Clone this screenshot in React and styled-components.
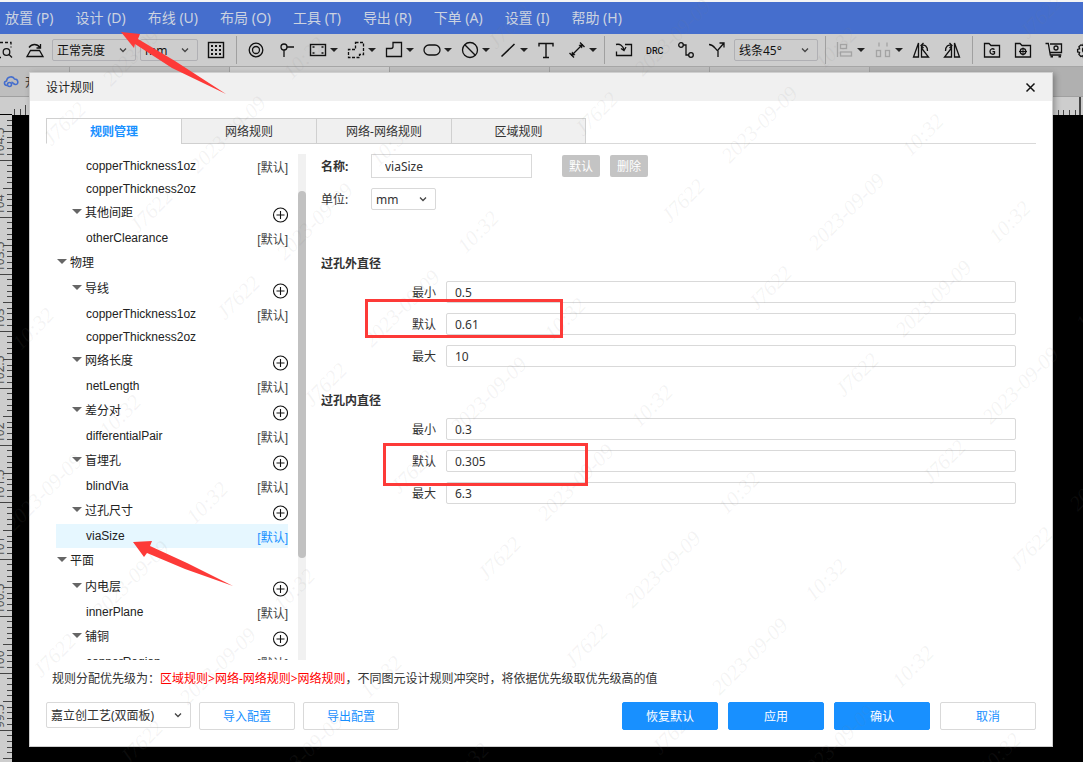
import React, { useState } from 'react';
import styled, { createGlobalStyle, css } from 'styled-components';

const GlobalStyle = createGlobalStyle`
  * {
    box-sizing: border-box;
  }
  body {
    margin: 0;
    font-family: "Noto Sans", "Noto Sans CJK SC", sans-serif;
    font-size: 12px;
    color: #333;
  }
  button, input, select {
    font: inherit;
    color: inherit;
    margin: 0;
  }
`;

const Page = styled.div`
  position: relative;
  display: flex;
  flex-direction: column;
  height: 100vh;
  overflow: hidden;
  background-color: #000;
`;

/* ---------- menu and toolbar ---------- */

const MenuBar = styled.nav`
  display: flex;
  flex: none;
  gap: 22px;
  height: 34px;
  padding-left: 5px;
  border-top: 2px solid #f4f4f4;
  background-color: #456ecd;
`;

const MenuItem = styled.button`
  padding: 0;
  border: 0;
  background: none;
  color: #ccd3e0;
  font-size: 14px;
  line-height: 20px;
  white-space: nowrap;
`;

const Toolbar = styled.div`
  display: flex;
  flex: none;
  align-items: center;
  height: 33px;
  margin-left: -11px;
  border-bottom: 1px solid #a6a6a6;
  background-color: #cdcdcd;
  color: #111;
  overflow: hidden;
`;

const ToolButton = styled.button`
  display: flex;
  flex: none;
  align-items: center;
  height: 28px;
  padding: 0 ${props => (props.$caret ? '3px' : '4px')} 0 3px;
  border: 0;
  background: none;
  color: ${props => (props.$disabled ? '#a3a3a3' : '#111')};
`;

const Caret = styled.span`
  width: 8px;
  border: 4px solid transparent;
  border-top-color: #222;
  border-bottom: 0;
`;

const Divider = styled.span`
  flex: none;
  width: 1px;
  height: 28px;
  margin: 0 4px;
  background-color: #a0a0a0;
`;

const SelectBox = styled.span`
  display: grid;
  flex: none;
  align-items: center;
  width: ${props => props.$width};
  height: ${props => props.$height || '22px'};
  margin: ${props => (props.$toolbar ? '0 3px 0 1px' : '0')};
  border: 1px solid ${props => (props.$toolbar ? '#b0b0b4' : '#d9d9d9')};
  border-radius: 2px;

  select, svg {
    grid-area: 1 / 1;
  }
  select {
    width: 100%;
    height: 100%;
    padding: 0 18px 0 4px;
    border: 0;
    outline: 0;
    appearance: none;
    background: none;
  }
  svg {
    justify-self: end;
    margin-right: 8px;
    pointer-events: none;
  }
`;

const DocTabs = styled.div`
  display: flex;
  flex: none;
  height: 30px;
  background-color: #b0b0b0;
  border-bottom: 1px solid #a0a0a0;
`;

const DocTab = styled.div`
  display: flex;
  align-items: center;
  gap: 6px;
  width: ${props => (props.$first ? '70px' : '160px')};
  padding-left: 3px;
  border-right: 1px solid #a0a0a0;
  background-color: ${props => (props.$active ? '#cdcdcd' : '#bebebe')};
  white-space: nowrap;
`;

const TopRuler = styled.svg`
  display: block;
  flex: none;
  width: 100%;
  height: 18px;
  background-color: #cdcdcd;
`;

const SideRuler = styled.svg`
  display: block;
  flex: 1;
  width: 12px;
  min-height: 0;
  background-color: #cdcdcd;
  font-size: 12px;
`;

/* ---------- dialog ---------- */

const Dialog = styled.section`
  position: absolute;
  top: 72px;
  right: 30px;
  bottom: 15px;
  left: 29px;
  display: flex;
  flex-direction: column;
  border: 1px solid #cfcfcf;
  background-color: #fff;
  box-shadow: 2px 2px 6px rgba(0, 0, 0, 0.3);
`;

const DialogHeader = styled.header`
  display: flex;
  flex: none;
  align-items: center;
  justify-content: space-between;
  height: 28px;
  padding: 0 16px;
  background-color: #f0f0f0;
`;

const DialogTitle = styled.h1`
  margin: 0;
  font-size: 12px;
  font-weight: normal;
  color: #222;
`;

const CloseButton = styled.button`
  display: flex;
  padding: 0;
  border: 0;
  background: none;
`;

const DialogBody = styled.div`
  display: flex;
  flex: 1;
  flex-direction: column;
  min-height: 0;
  padding: 17px 16px 16px;
`;

const TabList = styled.div`
  display: flex;
  flex: none;
  height: 26px;
  margin-bottom: 10px;

  &::after {
    content: '';
    flex: 1;
    border-bottom: 1px solid #d9d9d9;
  }
`;

const Tab = styled.button`
  width: 135px;
  padding: 0;
  border: 1px solid #d0d0d0;
  border-right-width: 0;
  background-color: #f0f0f0;

  &:last-of-type {
    border-right-width: 1px;
  }

  ${props => props.$active && css`
    border-bottom-color: #fff;
    background-color: #fff;
    color: #1890ff;
    font-weight: bold;
  `}
`;

const Columns = styled.div`
  display: flex;
  flex: 1;
  min-height: 0;
`;

const Tree = styled.div`
  width: 242px;
  padding-left: 10px;
  overflow: hidden;
`;

const TreeRow = styled.div`
  display: flex;
  align-items: center;
  justify-content: space-between;
  height: ${props => (props.$plain ? '22px' : '24px')};
  padding-left: 30px;
  background-color: ${props => (props.$selected ? '#e6f7ff' : 'transparent')};
  font-family: "Liberation Sans", "Noto Sans CJK SC", sans-serif;
  color: #222;
`;

const GroupRow = styled(TreeRow)`
  height: 26px;
  padding-bottom: 3px;
  padding-left: ${props => (props.$top ? '1px' : '16px')};
`;

const GroupName = styled.span`
  display: flex;
  align-items: center;
  gap: 3px;
`;

const GroupArrow = styled.span`
  border: 5px solid transparent;
  border-top-color: #666;
  border-bottom: 0;
`;

const AddButton = styled.button`
  display: flex;
  padding: 7px 0 0;
  border: 0;
  background: none;
  color: #111;
`;

const DefaultMark = styled.span`
  color: ${props => (props.$selected ? '#1890ff' : '#444')};
`;

const ScrollTrack = styled.div`
  width: 8px;
  margin-left: 10px;
  padding-top: 37px;
  background-color: #f1f1f1;
`;

const ScrollThumb = styled.div`
  height: 367px;
  border-radius: 4px;
  background-color: #c1c1c1;
`;

const RuleForm = styled.form`
  flex: 1;
  min-width: 0;
  padding: 0 20px 0 15px;
`;

const FormRow = styled.div`
  display: flex;
  align-items: center;
  height: 24px;
  margin-bottom: 9px;
`;

const RowLabel = styled.label`
  width: 50px;
  font-weight: ${props => (props.$bold ? 'bold' : 'normal')};
`;

const NameInput = styled.input`
  width: 161px;
  height: 24px;
  margin-right: 30px;
  padding: 0 13px;
  border: 1px solid #d9d9d9;
  outline: 0;
`;

const SmallButton = styled.button`
  width: 38px;
  height: 22px;
  margin-right: 10px;
  padding: 0;
  border: 0;
  border-radius: 2px;
  background-color: #c4c4c4;
  color: #fff;
`;

const FieldGroup = styled.fieldset`
  margin: 0 0 24px;
  padding: 0;
  border: 0;

  &:first-of-type {
    margin-top: 43px;
  }
`;

const FieldTitle = styled.legend`
  margin-bottom: 7px;
  padding: 0;
  font-weight: bold;
  line-height: 20px;
`;

const Field = styled.div`
  display: grid;
  grid-template-columns: 115px 1fr;
  column-gap: 10px;
  align-items: center;

  & + & {
    margin-top: 10px;
  }
  label {
    text-align: right;
  }
`;

const FieldInput = styled.input`
  width: 100%;
  height: 22px;
  padding: 0 8px;
  border: 1px solid #d9d9d9;
  border-radius: 2px;
  outline: 0;
`;

const Priority = styled.p`
  flex: none;
  margin: 0;
  padding: 9px 6px 13px;
  line-height: 20px;
  white-space: nowrap;
`;

const Highlight = styled.span`
  color: #f00;
`;

const Footer = styled.footer`
  display: flex;
  flex: none;
  align-items: flex-start;
  gap: 8px;
`;

const FooterActions = styled.div`
  display: flex;
  gap: 10px;
  margin-left: auto;
`;

const Button = styled.button`
  width: 96px;
  height: 28px;
  padding: 0;
  border: 1px solid ${props => (props.$primary ? '#1890ff' : '#d9d9d9')};
  border-radius: 2px;
  background-color: ${props => (props.$primary ? '#1890ff' : '#fff')};
  color: ${props => (props.$primary ? '#fff' : '#1890ff')};
`;

/* ---------- annotations and watermark ---------- */

const Overlay = styled.div`
  position: absolute;
  inset: 0;
  overflow: hidden;
  pointer-events: none;
`;

const MarkBox = styled.div`
  position: absolute;
  top: ${props => props.$top};
  left: ${props => props.$left};
  width: ${props => props.$width};
  height: ${props => props.$height};
  border: 3px solid #fd3a38;
`;

const Arrows = styled.svg`
  position: absolute;
  top: 0;
  left: 0;
  fill: #fd3a38;
`;

const WatermarkSheet = styled.div`
  display: grid;
  grid-template-columns: repeat(5, 108px 108px 108px 59px);
  grid-auto-rows: 123px;
  width: 1915px;
  align-items: center;
  justify-items: center;
  transform: rotate(-45deg) translate(-862px, -51px);
  transform-origin: 0 0;
  color: rgba(128, 128, 128, 0.09);
  font-family: "Liberation Serif", serif;
  font-size: 21px;
  font-style: italic;
`;

/* ---------- icons ---------- */

const Icon = ({ children }) => (
  <svg width="24" height="24" viewBox="0 0 24 24" fill="none" stroke="currentColor" strokeWidth="1.3">
    {children}
  </svg>
);

const Chevron = () => (
  <svg width="8" height="8" viewBox="0 0 8 8" fill="none" stroke="#444" strokeWidth="1.3">
    <path d="M1 2.5l3 3 3-3" />
  </svg>
);

const PlusCircle = () => (
  <svg width="16" height="16" viewBox="0 0 16 16" fill="none" stroke="currentColor" strokeWidth="1.1">
    <circle cx="8.5" cy="8" r="7" />
    <path d="M8.5 4v8M4.5 8h8" />
  </svg>
);

const icons = {
  marquee: <><path d="M3 4.5h16v5M3 19.500h6" strokeDasharray="3 2" /><circle cx="14.500" cy="14" r="3.300" /><path d="M17 16.500l3 3" /></>,
  flat: <><path d="M7.500 12.500h9l3.500 6H4z" /><path d="M6 9.500c3-4 8-4 11 0M17.500 6v4h-4" /></>,
  grid: <><rect x="4.500" y="4.500" width="15" height="15" strokeWidth="1.400" /><path d="M7 8h10M7 12h10M7 16h10" strokeWidth="2" strokeDasharray="2 2" /></>,
  via: <><circle cx="12" cy="12" r="6.800" /><circle cx="12" cy="12" r="3.500" /></>,
  pin: <><circle cx="9" cy="9" r="3" /><path d="M12 9h7M9 12v7" /></>,
  pad: <><rect x="4.500" y="6.500" width="15" height="11" strokeWidth="1.400" /><path d="M6.500 9h2M15.500 9h2M6.500 15h2M15.500 15h2" /></>,
  region: <path d="M11.500 4.500h8v12h-4v3h-11v-8h7z" strokeDasharray="3 1.500" />,
  poly: <path d="M11 4.500h8.500v14h-15v-8H9q2 0 2-2z" />,
  slot: <rect x="4" y="7" width="16" height="10" rx="5" />,
  forbid: <><circle cx="12" cy="12" r="7.500" /><path d="M6.800 6.800l10.500 10.500" /></>,
  line: <path d="M5.500 18.500L18.500 6" strokeWidth="1.6" />,
  text: <path d="M5 8.500V5.500h14v3M12 5.500v14M9 19.500h6" strokeWidth="1.400" />,
  measure: <><path d="M7 17L17 7M4.500 15l4.500 4.500M15 4.500l4.500 4.500" /><path d="M6 18l1-4.500 3.500 3.500zM18 6l-1 4.500L13.500 7z" fill="currentColor" stroke="none" /></>,
  importIn: <><path d="M13 6.500h6.500v11h-15v-4" /><path d="M4 6.500c4-1 7 1 8 5.500M9 10.500l3 2 2-3.500" /></>,
  drc: <text x="3" y="16" fontFamily="Roboto" fontSize="9" fontWeight="500" fill="currentColor" stroke="none">DRC</text>,
  route: <><circle cx="7" cy="7" r="2.300" /><circle cx="17" cy="17" r="2.300" /><path d="M9.300 7H12v10h2.700" /></>,
  fan: <><path d="M4 6.500c5 0 6 4.500 9 6.500v6M13 12l6-7M14.500 5H19v4.500" /></>,
  align: <><path d="M4.500 4v15" /><rect x="7.500" y="6.500" width="6" height="4" /><rect x="7.500" y="14" width="11" height="4" /></>,
  spread: <><path d="M8 4.500v4M16 4.500v4" /><rect x="5.500" y="12.500" width="4" height="6" /><rect x="14.500" y="12.500" width="4" height="6" /></>,
  flipLeft: <><path d="M9.500 5v14h-5zM12.500 10v9h7zM12 7.500c4-1.500 6.500 1 6.500 5.500M14.500 5L12 7.500l2.500 2.500" /></>,
  flipRight: <><path d="M14.500 5v14h5zM11.500 10v9h-7zM12 7.500C8 6 5.500 8.500 5.500 13M9.500 5L12 7.500 9.500 10" /></>,
  gerber: <><path d="M4.500 19V5.500H9l2 2h8.500V19z" /><path d="M14.500 11.500c-2-1.500-4.500-.5-4.500 2s3 3.500 4.500 2v-1.800h-2" /></>,
  place: <><path d="M4.500 19V5.500H9l2 2h8.500V19z" /><circle cx="12" cy="13.500" r="2.800" /><path d="M12 9.500v8M8 13.500h8" strokeWidth="1" /></>,
  cart: <><path d="M3.500 5.500h2.800l2 11.500h11M8 6h11.500v8.500H8" /><circle cx="14" cy="10" r="2" /><path d="M8.500 18.500h2.500M16.500 18.500H19" strokeWidth="2" /></>,
  gear: <><circle cx="12" cy="12" r="2.500" /><path d="M10.500 5.500h3l.6 2 2-.6 1.900 1.900-.6 2 2 .6v2.500l-2 .6.600 2-2 2-2-.7-.5 2h-3l-.6-2-2 .6-2-2 .7-2-2-.5v-2.500l2-.6-.7-2 2-1.900 2 .6z" /></>,
};

const Tool = ({ name, label, caret, disabled }) => (
  <ToolButton type="button" aria-label={label} $caret={caret} $disabled={disabled}>
    <Icon>{icons[name]}</Icon>
    {caret && <Caret />}
  </ToolButton>
);

/* ---------- data ---------- */

const menus = ['放置 (P)', '设计 (D)', '布线 (U)', '布局 (O)', '工具 (T)', '导出 (R)', '下单 (A)', '设置 (I)', '帮助 (H)'];

const tabs = ['规则管理', '网络规则', '网络-网络规则', '区域规则'];

const tree = [
  { id: 'space-1oz', name: 'copperThickness1oz', isDefault: true },
  { id: 'space-2oz', name: 'copperThickness2oz' },
  { group: '其他间距' },
  { id: 'other', name: 'otherClearance', isDefault: true },
  { group: '物理', top: true },
  { group: '导线' },
  { id: 'wire-1oz', name: 'copperThickness1oz', isDefault: true },
  { id: 'wire-2oz', name: 'copperThickness2oz' },
  { group: '网络长度' },
  { id: 'net', name: 'netLength', isDefault: true },
  { group: '差分对' },
  { id: 'diff', name: 'differentialPair', isDefault: true },
  { group: '盲埋孔' },
  { id: 'blind', name: 'blindVia', isDefault: true },
  { group: '过孔尺寸' },
  { id: 'via', name: 'viaSize', isDefault: true },
  { group: '平面', top: true },
  { group: '内电层' },
  { id: 'inner', name: 'innerPlane', isDefault: true },
  { group: '铺铜' },
  { id: 'region', name: 'copperRegion', isDefault: true },
];

const fieldGroups = [
  { id: 'outer', title: '过孔外直径', values: ['0.5', '0.61', '10'] },
  { id: 'hole', title: '过孔内直径', values: ['0.3', '0.305', '6.3'] },
];

const fieldLabels = ['最小', '默认', '最大'];

const rulerLabels = ['104.5', '104', '103.5', '103', '102.5', '102', '101.5', '101', '100.5', '100', '99.5', '99'];

const watermark = ['J7622', '2023-09-09', '10:32', ''];

// the sheet is turned by 45 degrees, so its corner cells never reach the window
const isOnScreen = (row, group, column) => {
  const along = -862 + group * 383 + column * 108 + 54;
  const down = 10 + row * 123;
  const x = (along + down) * Math.SQRT1_2;
  const y = (down - along) * Math.SQRT1_2;
  return x > -30 && y > -30 && x < window.innerWidth + 30 && y < window.innerHeight + 30;
};

/* ---------- parts ---------- */

const ToolbarSelect = ({ label, width, value }) => (
  <SelectBox $toolbar $width={width}>
    <select aria-label={label}><option>{value}</option></select>
    <Chevron />
  </SelectBox>
);

const MainToolbar = () => (
  <Toolbar>
    <Tool name="marquee" label="框选" />
    <Tool name="flat" label="翻转" />
    <ToolbarSelect label="亮度" width="84px" value="正常亮度" />
    <ToolbarSelect label="画布单位" width="58px" value="mm" />
    <Tool name="grid" label="网格" />
    <Divider />
    <Tool name="via" label="过孔" />
    <Tool name="pin" label="测试点" />
    <Tool name="pad" label="焊盘" caret />
    <Tool name="region" label="区域" caret />
    <Tool name="poly" label="铺铜" caret />
    <Tool name="slot" label="挖槽" caret />
    <Tool name="forbid" label="禁止区域" caret />
    <Tool name="line" label="线条" caret />
    <Tool name="text" label="文本" />
    <Tool name="measure" label="尺寸" caret />
    <Divider />
    <Tool name="importIn" label="导入变更" />
    <Tool name="drc" label="检查" />
    <Tool name="route" label="布线" />
    <Tool name="fan" label="拉伸" />
    <ToolbarSelect label="拐角" width="84px" value="线条45°" />
    <Divider />
    <Tool name="align" label="对齐" caret disabled />
    <Tool name="spread" label="分布" caret disabled />
    <Tool name="flipLeft" label="左旋转" />
    <Tool name="flipRight" label="右旋转" />
    <Divider />
    <Tool name="gerber" label="制板文件" />
    <Tool name="place" label="坐标文件" />
    <Tool name="cart" label="下单" />
    <Tool name="gear" label="设置" />
  </Toolbar>
);

const Rulers = () => (
  <>
    <TopRuler stroke="#444">
      <path d="M14.500 12v6M20.500 12v6M25.500 8v10M1058.500 13v5M1063.500 13v5M1069.500 13v5M1075.500 13v5" />
      <path d="M1080 0v18" strokeWidth="2" />
      <path d="M0 17.500h12" stroke="#000" />
    </TopRuler>
    <SideRuler>
      {rulerLabels.map((label, i) => (
        <g key={label} transform={`translate(0 ${i * 57 - 13})`}>
          <path
            stroke="#444"
            d="M7 6.500h5M7 12.500h5M7 18.500h5M7 23.500h5M3 29.500h9M7 35.500h5M7 40.500h5M7 46.500h5M7 52.500h5M0 58.500h12"
          />
          <text transform="translate(4 56) rotate(-90)" fill="#555">{label}</text>
        </g>
      ))}
    </SideRuler>
  </>
);

const RuleTree = () => {
  const [selected, setSelected] = useState('via');

  return <Tree>
    {tree.map(row => (row.group
      ? <GroupRow key={row.group} $top={row.top}>
        <GroupName><GroupArrow />{row.group}</GroupName>
        {!row.top && <AddButton type="button" aria-label={`新增${row.group}`}><PlusCircle /></AddButton>}
      </GroupRow>
      : <TreeRow
        key={row.id}
        $plain={!row.isDefault}
        $selected={row.id === selected}
        onClick={() => setSelected(row.id)}
      >
        <span>{row.name}</span>
        {row.isDefault && <DefaultMark $selected={row.id === selected}>[默认]</DefaultMark>}
      </TreeRow>
    ))}
  </Tree>
};

const RuleDetails = () => (
  <RuleForm>
    <FormRow>
      <RowLabel $bold htmlFor="rule-name">名称:</RowLabel>
      <NameInput id="rule-name" defaultValue="viaSize" />
      <SmallButton type="button">默认</SmallButton>
      <SmallButton type="button">删除</SmallButton>
    </FormRow>
    <FormRow>
      <RowLabel htmlFor="rule-unit">单位:</RowLabel>
      <SelectBox $width="65px">
        <select id="rule-unit"><option>mm</option></select>
        <Chevron />
      </SelectBox>
    </FormRow>
    {fieldGroups.map(group => (
      <FieldGroup key={group.id}>
        <FieldTitle>{group.title}</FieldTitle>
        {group.values.map((value, i) => (
          <Field key={fieldLabels[i]}>
            <label htmlFor={`${group.id}-${i}`}>{fieldLabels[i]}</label>
            <FieldInput id={`${group.id}-${i}`} defaultValue={value} />
          </Field>
        ))}
      </FieldGroup>
    ))}
  </RuleForm>
);

const RulesDialog = () => {
  const [active, setActive] = useState(tabs[0]);

  return <Dialog>
    <DialogHeader>
      <DialogTitle>设计规则</DialogTitle>
      <CloseButton type="button" aria-label="关闭">
        <svg width="11" height="11" viewBox="0 0 11 11" stroke="#111" strokeWidth="1.5">
          <path d="M1.500 1.500l8 8M9.500 1.500l-8 8" />
        </svg>
      </CloseButton>
    </DialogHeader>
    <DialogBody>
      <TabList>
        {tabs.map(tab => (
          <Tab key={tab} type="button" $active={tab === active} onClick={() => setActive(tab)}>{tab}</Tab>
        ))}
      </TabList>
      <Columns>
        <RuleTree />
        <ScrollTrack><ScrollThumb /></ScrollTrack>
        <RuleDetails />
      </Columns>
      <Priority>
        规则分配优先级为：<Highlight>区域规则&gt;网络-网络规则&gt;网络规则</Highlight>，不同图元设计规则冲突时，将依据优先级取优先级高的值
      </Priority>
      <Footer>
        <SelectBox $width="145px" $height="26px">
          <select aria-label="工艺"><option>嘉立创工艺(双面板)</option></select>
          <Chevron />
        </SelectBox>
        <Button type="button">导入配置</Button>
        <Button type="button">导出配置</Button>
        <FooterActions>
          <Button type="button" $primary>恢复默认</Button>
          <Button type="button" $primary>应用</Button>
          <Button type="button" $primary>确认</Button>
          <Button type="button">取消</Button>
        </FooterActions>
      </Footer>
    </DialogBody>
  </Dialog>
};

const Watermark = () => (
  <Overlay aria-hidden="true">
    <WatermarkSheet>
      {Array.from({ length: 11 * 5 }, (_, n) => watermark.map((text, i) => (
        <span key={`${n}-${i}`}>{isOnScreen(Math.floor(n / 5), n % 5, i) && text}</span>
      )))}
    </WatermarkSheet>
  </Overlay>
);

const App = () => (
  <Page>
    <GlobalStyle />
    <MenuBar>
      {menus.map(menu => <MenuItem key={menu} type="button">{menu}</MenuItem>)}
    </MenuBar>
    <MainToolbar />
    <DocTabs>
      <DocTab $first>
        <svg width="16" height="13" viewBox="0 0 16 13" fill="none" stroke="#456ecd" strokeWidth="1.6">
          <path d="M4 10.500C1 10.500.5 6.500 3.500 6 4 1.500 10 .5 11.500 4c4 0 4.500 5.500 1 5.500-2 0-2.500-2-4-2.500" />
          <circle cx="6.500" cy="9.500" r="2" />
        </svg>
        开
      </DocTab>
      <DocTab />
      <DocTab $active />
      <DocTab />
      <DocTab />
      <DocTab />
    </DocTabs>
    <Rulers />
    <RulesDialog />
    <Watermark />
    <Overlay>
      <MarkBox $top="299px" $left="365px" $width="198px" $height="39px" />
      <MarkBox $top="443px" $left="383px" $width="205px" $height="43px" />
      <Arrows width="240" height="600" viewBox="0 0 240 600">
        <path d="M121 32l19 2-2 5 37 22 51 33-54-26-37-24-1 4z" />
        <path d="M133 542l19-1-2 5 37 17 46 23-48-17-38-16-3 4z" />
      </Arrows>
    </Overlay>
  </Page>
);

export default App;
